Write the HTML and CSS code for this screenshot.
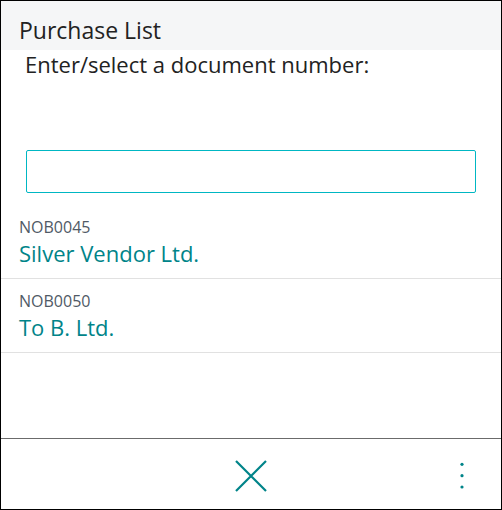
FILE: index.html
```html
<!DOCTYPE html>
<html lang="en">
<head>
<meta charset="UTF-8">
<meta name="viewport" content="width=device-width, initial-scale=1.0">
<title>Purchase List</title>
<link rel="stylesheet" href="styles.css">
</head>
<body>
<div class="frame">
  <div class="head">Purchase List</div>
  <div class="prompt">Enter/select a document number:</div>
  <input class="doc-input" type="text">
  <ul class="docs">
    <li class="doc">
      <div class="doc-no">NOB0045</div>
      <div class="doc-name">Silver Vendor Ltd.</div>
    </li>
    <li class="doc">
      <div class="doc-no">NOB0050</div>
      <div class="doc-name">To B. Ltd.</div>
    </li>
  </ul>
  <div class="foot">
    <span></span>
    <button class="icon-btn" title="Close">
      <svg width="32" height="32" viewBox="0 0 32 32"><path d="M1 1L31 31M31 1L1 31" stroke="currentColor" stroke-width="2.2" fill="none"/></svg>
    </button>
    <button class="icon-btn more" title="More">
      <svg width="4" height="28" viewBox="0 0 4 28"><circle cx="2" cy="2.3" r="1.6" fill="currentColor"/><circle cx="2" cy="13.7" r="1.6" fill="currentColor"/><circle cx="2" cy="25" r="1.6" fill="currentColor"/></svg>
    </button>
  </div>
</div>
</body>
</html>
```

FILE: styles.css
```css
body { margin: 0; font-family: "Open Sans", "Noto Sans", sans-serif; color: #222; }
.frame { width: 502px; height: 510px; box-sizing: border-box; border: 1px solid #000;
  display: flex; flex-direction: column; background: #fff; }
.head { background: #f5f6f7; font-size: 23px; line-height: 32px; padding: 13px 18px 4px; }
.prompt { font-size: 22px; line-height: 28px; padding-left: 24px; }
.doc-input { box-sizing: border-box; width: 450px; height: 43px; margin: 72px 25px 0;
  border: 1px solid #00b7c3; border-radius: 2px; outline: none; padding: 0 10px;
  font: inherit; font-size: 18px; }
.docs { list-style: none; margin: 12px 0 0; padding: 0; flex: 1; }
.doc { padding: 11px 18px; border-bottom: 1px solid #e1e1e1; }
.doc-no { font-size: 16px; line-height: 22px; color: #505a66; margin-bottom: 1px; }
.doc-name { font-size: 22px; line-height: 28px; color: #008489; }
.foot { height: 71px; box-sizing: border-box; border-top: 1px solid #6b6b6b; padding-top: 4px;
  display: grid; grid-template-columns: 1fr auto 1fr; align-items: center; }
.icon-btn { background: none; border: none; padding: 0; color: #008489; cursor: pointer;
  display: flex; }
.more { justify-self: end; margin-right: 37px; }
```
